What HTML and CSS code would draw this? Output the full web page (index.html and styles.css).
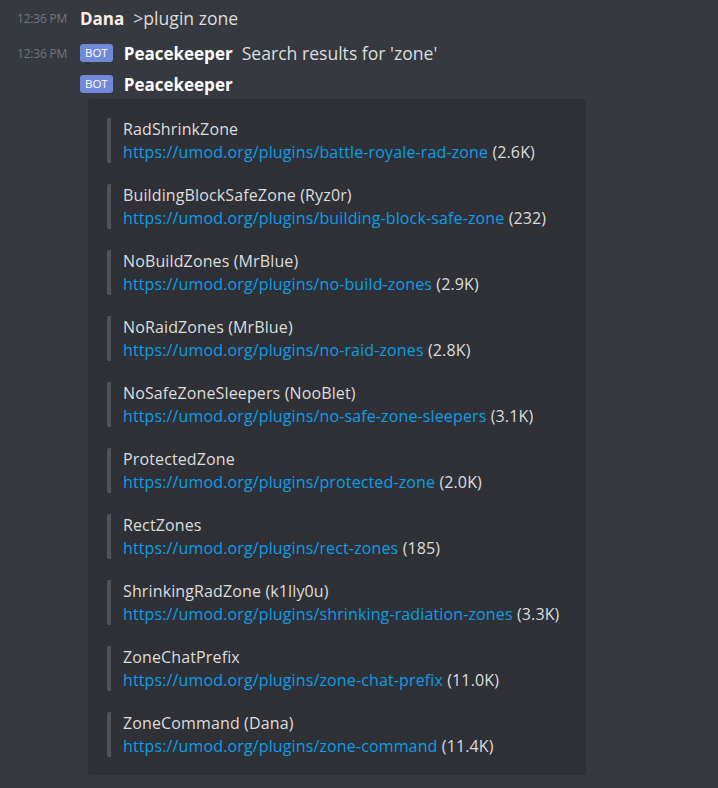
FILE: index.html
```html
<!DOCTYPE html>
<html>
<head>
<meta charset="utf-8">
<link rel="stylesheet" href="styles.css">
</head>
<body>
<div class="chat">
  <div class="msg first">
    <span class="time">12:36 PM</span>
    <span class="author dana">Dana</span>
    <span class="text">&gt;plugin zone</span>
  </div>
  <div class="msg second">
    <span class="time">12:36 PM</span>
    <span class="bot">BOT</span>
    <span class="author">Peacekeeper</span>
    <span class="text">Search results for 'zone'</span>
  </div>
  <div class="msg third">
    <span class="time"></span>
    <span class="bot">BOT</span>
    <span class="author">Peacekeeper</span>
  </div>
  <div class="embed">
    <div class="entry"><div class="name">RadShrinkZone</div><div class="line"><a>https://umod.org/plugins/battle-royale-rad-zone</a> (2.6K)</div></div>
    <div class="entry"><div class="name">BuildingBlockSafeZone (Ryz0r)</div><div class="line"><a>https://umod.org/plugins/building-block-safe-zone</a> (232)</div></div>
    <div class="entry"><div class="name">NoBuildZones (MrBlue)</div><div class="line"><a>https://umod.org/plugins/no-build-zones</a> (2.9K)</div></div>
    <div class="entry"><div class="name">NoRaidZones (MrBlue)</div><div class="line"><a>https://umod.org/plugins/no-raid-zones</a> (2.8K)</div></div>
    <div class="entry"><div class="name">NoSafeZoneSleepers (NooBlet)</div><div class="line"><a>https://umod.org/plugins/no-safe-zone-sleepers</a> (3.1K)</div></div>
    <div class="entry"><div class="name">ProtectedZone</div><div class="line"><a>https://umod.org/plugins/protected-zone</a> (2.0K)</div></div>
    <div class="entry"><div class="name">RectZones</div><div class="line"><a>https://umod.org/plugins/rect-zones</a> (185)</div></div>
    <div class="entry"><div class="name">ShrinkingRadZone (k1lly0u)</div><div class="line"><a>https://umod.org/plugins/shrinking-radiation-zones</a> (3.3K)</div></div>
    <div class="entry"><div class="name">ZoneChatPrefix</div><div class="line"><a>https://umod.org/plugins/zone-chat-prefix</a> (11.0K)</div></div>
    <div class="entry"><div class="name">ZoneCommand (Dana)</div><div class="line"><a>https://umod.org/plugins/zone-command</a> (11.4K)</div></div>
  </div>
</div>
</body>
</html>
```

FILE: styles.css
```css
html, body {
  margin: 0;
  padding: 0;
  background: #36393f;
}
body {
  font-family: "Open Sans", "Noto Sans", sans-serif;
  color: #dcddde;
  width: 718px;
  height: 788px;
  overflow: hidden;
}
.chat {
  padding-top: 6px;
}
.msg {
  display: flex;
  align-items: center;
  height: 24px;
}
.second { margin-top: 11px; }
.third { margin-top: 7px; }
.time {
  width: 63px;
  padding-left: 17px;
  font-size: 12px;
  letter-spacing: -0.2px;
  color: #72767d;
  flex: none;
}
.author {
  font-weight: 700;
  font-size: 17px;
  color: #ffffff;
  margin-right: 9px;
}
.dana { color: #fcefe6; }
.text {
  font-size: 17.6px;
  color: #dcddde;
}
.bot {
  background: #7289da;
  color: #fff;
  font-size: 11.5px;
  border-radius: 3px;
  padding: 1px 5px;
  height: 16px;
  line-height: 16px;
  margin-right: 11px;
}
.embed {
  margin-left: 88px;
  margin-top: 3px;
  width: 498px;
  box-sizing: border-box;
  background: #2f3136;
  border-radius: 3px;
  padding: 19px 0 18px 19px;
  display: flex;
  flex-direction: column;
  gap: 21px;
}
.entry {
  border-left: 4px solid #4f545c;
  border-radius: 2px;
  padding-left: 12px;
  height: 45px;
  display: flex;
  flex-direction: column;
  justify-content: center;
  font-size: 16px;
  letter-spacing: 0.13px;
  line-height: 23px;
}
.name { color: #dcddde; }
.line { color: #dcddde; }
.line a { color: #0a9ee6; }
```
